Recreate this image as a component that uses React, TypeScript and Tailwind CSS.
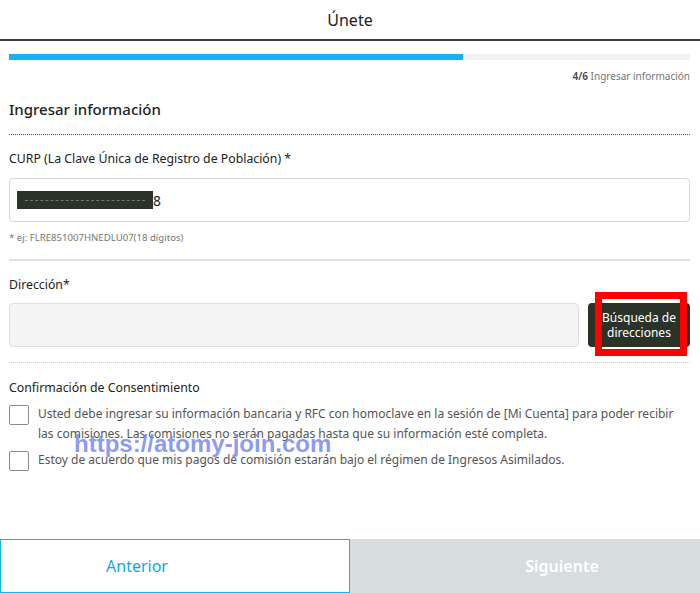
import React from 'react';

const font = { fontFamily: '"Noto Sans", "Open Sans", sans-serif' };

const Checkbox: React.FC = () => (
    <span className="mt-[1px] block h-[20px] w-[20px] shrink-0 rounded-[2px] border border-[#8a8a8a] bg-white" />
);

const App: React.FC = () => {
    const step = 4;
    const total = 6;

    return (
        <div className="relative flex h-[593px] w-[700px] flex-col overflow-hidden bg-white text-[#333]" style={font}>
            <header className="flex h-[41px] shrink-0 items-center justify-center border-b-2 border-[#3a403c] text-[16px] text-[#222]">
                Únete
            </header>

            <main className="flex flex-1 flex-col px-[9px] pr-[10px]">
                <div className="mt-[13px] h-[6px] w-full bg-[#f2f2f2]">
                    <div className="h-full bg-[#12b5f1]" style={{ width: `${(step / total) * 100}%` }} />
                </div>
                <p className="mt-[9px] text-right text-[10px] leading-[14px] text-[#777]">
                    <span className="font-semibold text-[#444]">{step}/{total}</span> Ingresar información
                </p>

                <h2 className="mt-[16px] text-[15px] font-medium leading-[20px] text-[#222]">Ingresar información</h2>
                <div className="mt-[15px] border-b border-dotted border-[#4d555a]" />

                <label className="mt-[15px] text-[12.3px] leading-[18px] text-[#222]">
                    CURP (La Clave Única de Registro de Población) *
                </label>
                <div className="mt-[10px] flex h-[44px] items-center rounded-[4px] border border-[#d5d9dc] px-[7px] text-[14px] text-[#222]">
                    <span className="flex h-[18px] w-[136px] items-center justify-center bg-[#2b3329]">
                        <span className="block w-[120px] border-t border-dashed border-[#6f7772]" />
                    </span>
                    <span>8</span>
                </div>
                <p className="mt-[9px] text-[9.6px] leading-[14px] text-[#777]">* ej: FLRE851007HNEDLU07(18 dígitos)</p>

                <div className="mt-[14px] border-b-2 border-[#dde1e4]" />

                <label className="mt-[15px] text-[12.3px] leading-[18px] text-[#222]">Dirección*</label>
                <div className="mt-[9px] flex h-[44px] gap-[9px]">
                    <div className="flex-1 rounded-[4px] border border-[#e0e0e0] bg-[#f4f4f4]" />
                    <button className="relative w-[102px] rounded-[4px] bg-[#2b3329] text-[12px] leading-[15px] text-white">
                        Búsqueda de
                        <br />
                        direcciones
                        <span className="absolute left-[7px] top-[-11px] h-[64px] w-[92px] border-[7px] border-[#ff0000]" />
                    </button>
                </div>

                <div className="mt-[15px] border-b border-dotted border-[#c8c8c8]" />

                <h3 className="mt-[16px] text-[12.3px] leading-[18px] text-[#222]">Confirmación de Consentimiento</h3>
                <div className="mt-[7px] flex gap-[9px]">
                    <Checkbox />
                    <p className="text-[12px] leading-[20px] text-[#555]">
                        Usted debe ingresar su información bancaria y RFC con homoclave en la sesión de [Mi Cuenta] para poder recibir
                        las comisiones. Las comisiones no serán pagadas hasta que su información esté completa.
                    </p>
                </div>
                <div className="mt-[6px] flex gap-[9px]">
                    <Checkbox />
                    <p className="text-[12px] leading-[20px] text-[#555]">
                        Estoy de acuerdo que mis pagos de comisión estarán bajo el régimen de Ingresos Asimilados.
                    </p>
                </div>
            </main>

            <span
                className="pointer-events-none absolute left-[74px] top-[430px] text-[24px] font-bold leading-[28px] text-[#7080ee]/80"
                style={{ fontFamily: '"Liberation Sans", Arial, sans-serif' }}
            >
                https://atomy-join.com
            </span>

            <footer className="flex h-[54px] shrink-0">
                <button className="w-[350px] border border-[#12b5f1] bg-white pr-[76px] text-[16px] text-[#12a8e8]">Anterior</button>
                <button className="flex-1 bg-[#d7dcdf] pl-[74px] text-[16px] font-semibold text-white">Siguiente</button>
            </footer>
        </div>
    );
};

export default App;
